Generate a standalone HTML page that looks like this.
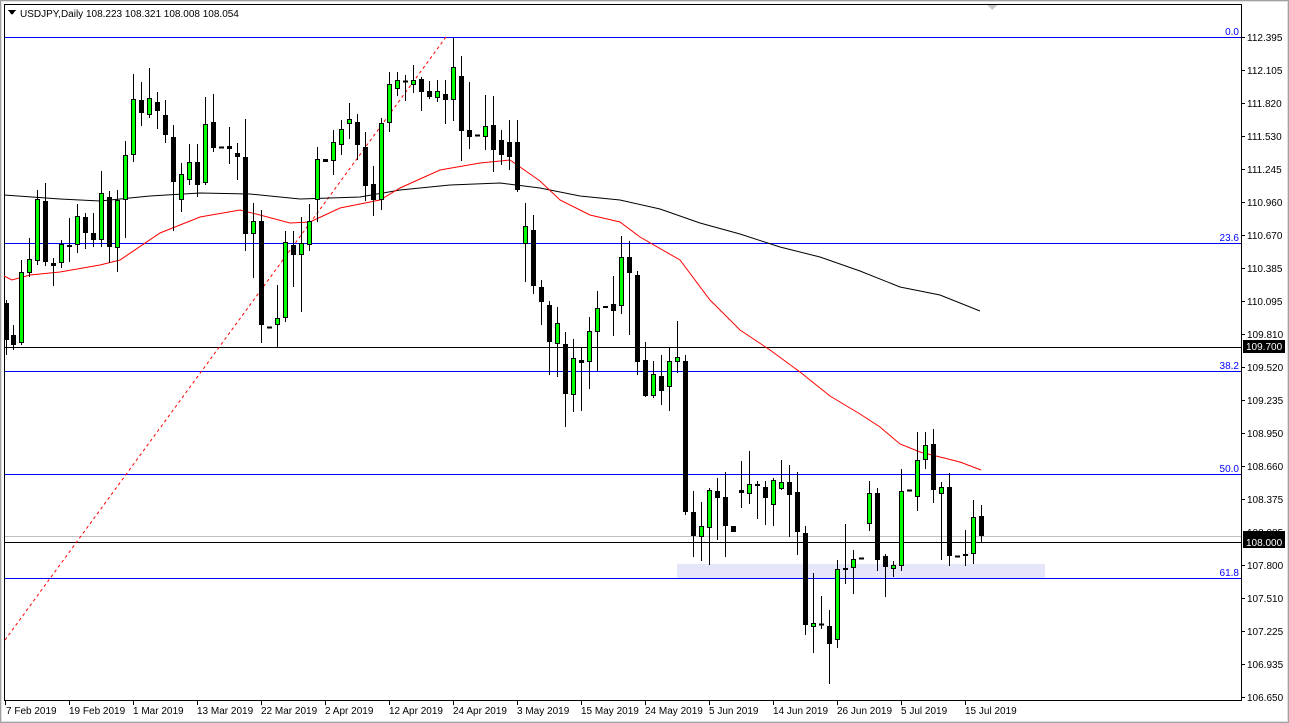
<!DOCTYPE html>
<html><head><meta charset="utf-8">
<style>
html,body{margin:0;padding:0;background:#fff;}
body{width:1289px;height:723px;overflow:hidden;position:relative;font-family:"Liberation Sans",sans-serif;}
svg{position:absolute;left:0;top:0;}
svg text{font-family:"Liberation Sans","DejaVu Sans",sans-serif;font-size:10px;}
</style></head><body>
<svg id="s" width="1289" height="723" viewBox="0 0 1289 723" shape-rendering="crispEdges">
<rect x="0" y="0" width="1289" height="723" fill="#fff"/>
<rect x="0.5" y="0.5" width="1288" height="722" fill="none" stroke="#a0a0a0"/>
<rect x="1.5" y="1.5" width="1286" height="720" fill="none" stroke="#e0e0e0"/>
<rect x="4.5" y="4.5" width="1237" height="696" fill="none" stroke="#000"/>
<polygon points="987,5 997,5 992,10" fill="#c8c8c8"/>
<rect x="677" y="564" width="368" height="14" fill="#e6e6fa"/>
<line x1="5" y1="37.5" x2="1241" y2="37.5" stroke="#0000ff"/>
<line x1="5" y1="243.5" x2="1241" y2="243.5" stroke="#0000ff"/>
<line x1="5" y1="371.5" x2="1241" y2="371.5" stroke="#0000ff"/>
<line x1="5" y1="474.5" x2="1241" y2="474.5" stroke="#0000ff"/>
<line x1="5" y1="578.5" x2="1241" y2="578.5" stroke="#0000ff"/>
<line x1="5" y1="347.5" x2="1241" y2="347.5" stroke="#000"/>
<line x1="5" y1="536.5" x2="1241" y2="536.5" stroke="#c0c0c0"/>
<line x1="5" y1="542.5" x2="1241" y2="542.5" stroke="#000"/>
<line x1="5" y1="640" x2="446" y2="37" stroke="#ff0000" stroke-dasharray="3,3" shape-rendering="auto"/>
<polyline fill="none" stroke="#000" shape-rendering="auto" points="4,195 60,199 100,201 150,196 200,193 250,194 300,199 330,198 360,197 400,190 450,185 500,183 540,188 580,196 620,200 660,209 700,223 740,234 780,247 820,257 860,271 900,287 940,295 980,311"/>
<polyline fill="none" stroke="#ff0000" shape-rendering="auto" points="4,276 12,280 30,275 60,272 100,265 120,260 160,233 200,217 240,210 260,215 290,223 310,222 340,208 380,200 400,188 440,170 480,163 510,160 540,181 560,200 590,215 620,222 640,237 680,260 710,300 740,330 770,350 800,372 830,396 860,414 880,427 900,444 920,452 960,462 981,470"/>
<g id="c"></g>
<g fill="#0000ff" text-anchor="end">
<text x="1239" y="35">0.0</text>
<text x="1239" y="241">23.6</text>
<text x="1239" y="369">38.2</text>
<text x="1239" y="472">50.0</text>
<text x="1239" y="576">61.8</text>
</g>
<g fill="#000">
<text x="1247" y="41">112.395</text>
<text x="1247" y="74">112.105</text>
<text x="1247" y="107">111.820</text>
<text x="1247" y="140">111.530</text>
<text x="1247" y="173">111.245</text>
<text x="1247" y="206">110.960</text>
<text x="1247" y="239">110.670</text>
<text x="1247" y="272">110.385</text>
<text x="1247" y="305">110.095</text>
<text x="1247" y="338">109.810</text>
<text x="1247" y="371">109.520</text>
<text x="1247" y="404">109.235</text>
<text x="1247" y="437">108.950</text>
<text x="1247" y="470">108.660</text>
<text x="1247" y="503">108.375</text>
<text x="1247" y="536">108.085</text>
<text x="1247" y="569">107.800</text>
<text x="1247" y="602">107.510</text>
<text x="1247" y="635">107.225</text>
<text x="1247" y="668">106.935</text>
<text x="1247" y="701">106.650</text>
</g>
<g stroke="#000">
<line x1="1241" y1="37.5" x2="1245" y2="37.5"/><line x1="1241" y1="70.5" x2="1245" y2="70.5"/><line x1="1241" y1="103.5" x2="1245" y2="103.5"/><line x1="1241" y1="136.5" x2="1245" y2="136.5"/><line x1="1241" y1="169.5" x2="1245" y2="169.5"/><line x1="1241" y1="202.5" x2="1245" y2="202.5"/><line x1="1241" y1="235.5" x2="1245" y2="235.5"/><line x1="1241" y1="268.5" x2="1245" y2="268.5"/><line x1="1241" y1="301.5" x2="1245" y2="301.5"/><line x1="1241" y1="334.5" x2="1245" y2="334.5"/><line x1="1241" y1="367.5" x2="1245" y2="367.5"/><line x1="1241" y1="400.5" x2="1245" y2="400.5"/><line x1="1241" y1="433.5" x2="1245" y2="433.5"/><line x1="1241" y1="466.5" x2="1245" y2="466.5"/><line x1="1241" y1="499.5" x2="1245" y2="499.5"/><line x1="1241" y1="565.5" x2="1245" y2="565.5"/><line x1="1241" y1="598.5" x2="1245" y2="598.5"/><line x1="1241" y1="631.5" x2="1245" y2="631.5"/><line x1="1241" y1="664.5" x2="1245" y2="664.5"/><line x1="1241" y1="697.5" x2="1245" y2="697.5"/>
</g>
<rect x="1243" y="340" width="42" height="13" fill="#000"/>
<text x="1246" y="350" fill="#fff">109.700</text>
<rect x="1243" y="531" width="42" height="8" fill="#000"/>
<rect x="1243" y="535" width="42" height="13" fill="#000"/>
<text x="1246" y="546" fill="#fff">108.000</text>
<g stroke="#000">
<line x1="5.5" y1="700" x2="5.5" y2="705"/><line x1="69.5" y1="700" x2="69.5" y2="705"/><line x1="133.5" y1="700" x2="133.5" y2="705"/><line x1="197.5" y1="700" x2="197.5" y2="705"/><line x1="261.5" y1="700" x2="261.5" y2="705"/><line x1="325.5" y1="700" x2="325.5" y2="705"/><line x1="389.5" y1="700" x2="389.5" y2="705"/><line x1="453.5" y1="700" x2="453.5" y2="705"/><line x1="517.5" y1="700" x2="517.5" y2="705"/><line x1="581.5" y1="700" x2="581.5" y2="705"/><line x1="645.5" y1="700" x2="645.5" y2="705"/><line x1="709.5" y1="700" x2="709.5" y2="705"/><line x1="773.5" y1="700" x2="773.5" y2="705"/><line x1="837.5" y1="700" x2="837.5" y2="705"/><line x1="901.5" y1="700" x2="901.5" y2="705"/><line x1="965.5" y1="700" x2="965.5" y2="705"/>
</g>
<g fill="#000">
<text x="6" y="714">7 Feb 2019</text>
<text x="69" y="714">19 Feb 2019</text>
<text x="133" y="714">1 Mar 2019</text>
<text x="197" y="714">13 Mar 2019</text>
<text x="261" y="714">22 Mar 2019</text>
<text x="325" y="714">2 Apr 2019</text>
<text x="389" y="714">12 Apr 2019</text>
<text x="453" y="714">24 Apr 2019</text>
<text x="517" y="714">3 May 2019</text>
<text x="581" y="714">15 May 2019</text>
<text x="645" y="714">24 May 2019</text>
<text x="709" y="714">5 Jun 2019</text>
<text x="773" y="714">14 Jun 2019</text>
<text x="837" y="714">26 Jun 2019</text>
<text x="901" y="714">5 Jul 2019</text>
<text x="965" y="714">15 Jul 2019</text>
</g>
<polygon points="8,10 16,10 12,15" fill="#000"/>
<text x="20" y="17" fill="#000">USDJPY,Daily  108.223 108.321 108.008 108.054</text>
</svg>
<script>
var d=[
[6,300,355,303,340,0],[13,325,350,335,345,0],[21,260,345,272,343,1],[29,238,277,259,273,1],[37,190,265,199,261,1],[45,183,266,201,262,0],[53,258,286,263,266,0],[61,240,268,244,263,1],[69,218,262,245,247,0],[77,204,253,216,245,1],[85,213,249,217,233,0],[93,213,247,233,240,0],[101,171,247,193,240,1],[109,191,263,197,247,0],[117,190,272,200,248,1],[125,141,238,155,200,1],[133,74,162,99,155,1],[141,82,126,100,113,0],[149,68,118,98,115,1],[157,92,129,102,111,0],[165,100,143,115,135,0],[173,125,231,137,182,0],[181,163,212,174,200,1],[189,144,185,162,180,1],[197,144,197,162,185,0],[205,97,185,124,183,1],[213,94,152,122,148,0],[221,147,148,147,148,0],[229,127,164,146,149,0],[237,143,180,153,157,0],[245,119,251,157,234,0],[253,203,278,221,234,1],[261,210,343,221,325,0],[269,327,328,327,328,0],[277,285,348,318,325,1],[285,231,322,242,318,1],[293,231,287,245,255,0],[301,217,312,243,255,1],[309,204,251,221,245,1],[317,147,222,159,200,1],[325,159,162,159,162,0],[333,130,175,142,161,1],[341,120,155,129,145,1],[349,103,139,119,124,1],[357,114,160,122,145,0],[365,132,201,147,186,0],[373,166,216,184,200,0],[381,118,210,123,200,1],[389,72,132,84,123,1],[397,72,96,80,89,1],[405,75,101,81,82,0],[413,65,93,80,85,1],[421,77,111,79,92,0],[429,81,99,91,97,0],[437,80,102,91,98,1],[445,80,124,94,100,0],[453,38,121,67,100,1],[461,56,161,76,131,0],[469,82,149,130,137,0],[477,135,136,135,136,0],[485,95,150,126,137,1],[493,96,172,125,150,0],[501,130,165,140,155,0],[509,120,170,142,157,0],[517,120,192,142,190,0],
[525,203,282,226,244,1],[533,215,294,230,286,0],[541,280,325,287,302,0],[549,301,375,305,342,0],[557,307,377,323,344,1],[565,332,427,344,394,0],[573,339,412,358,395,1],[581,348,411,360,363,0],[589,317,389,331,362,1],[597,291,371,308,332,1],[605,306,308,306,308,0],[613,276,336,304,311,0],[621,236,314,257,306,1],[629,241,335,257,273,0],[637,271,375,275,362,0],[645,342,397,360,396,0],[653,361,398,374,396,1],[661,355,405,376,391,0],[669,348,411,361,387,1],[677,321,373,357,362,1],[685,355,515,361,512,0],
[693,491,557,512,536,0],[701,502,561,526,537,1],[709,488,565,490,528,1],[717,478,540,491,498,0],[725,472,557,497,526,0],[733,526,532,526,532,0],[741,461,508,490,493,0],[749,451,504,484,494,1],[757,481,519,484,486,0],[765,481,525,487,498,0],[773,478,526,480,505,1],[781,460,490,482,489,1],[789,465,537,482,495,0],[797,472,555,492,532,0],[805,526,635,533,625,0],[813,573,653,623,627,1],[821,596,629,624,625,0],[829,610,684,626,644,0],[837,560,648,569,640,1],[845,524,584,568,570,0],[853,550,594,559,568,1],[861,558,559,558,559,0],[869,481,531,493,524,1],[877,488,571,493,560,0],[885,554,597,556,567,0],[893,561,577,565,569,1],[901,469,571,491,566,1],[909,490,491,490,491,0],[917,432,511,460,497,1],[925,432,469,445,460,1],[933,429,503,444,490,0],[941,482,560,487,494,1],[949,473,566,487,556,0],[957,556,557,556,557,0],[965,530,566,554,556,1],[973,500,564,517,554,1],[981,505,542,516,536,0]
];
var g=document.getElementById('c'),h='';
d.forEach(function(c){
 var x=c[0];
 h+='<line x1="'+(x+0.5)+'" y1="'+c[1]+'" x2="'+(x+0.5)+'" y2="'+c[2]+'" stroke="#000"/>';
 var bh=c[4]-c[3];
 if(bh<=1){h+='<line x1="'+(x-2)+'" y1="'+(c[3]+0.5)+'" x2="'+(x+3)+'" y2="'+(c[3]+0.5)+'" stroke="#000" stroke-width="2"/>';}
 else h+='<rect x="'+(x-1.5)+'" y="'+(c[3]+0.5)+'" width="4" height="'+(bh-1)+'" fill="'+(c[5]?'#00ff00':'#000')+'" stroke="#000"/>';
});
g.innerHTML=h;
</script>
</body></html>
